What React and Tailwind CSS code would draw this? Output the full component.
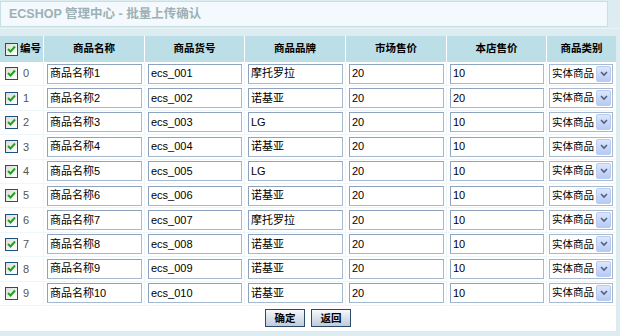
import React from "react";

const rows = [
  ["商品名称1", "ecs_001", "摩托罗拉", "20", "10"],
  ["商品名称2", "ecs_002", "诺基亚", "20", "20"],
  ["商品名称3", "ecs_003", "LG", "20", "10"],
  ["商品名称4", "ecs_004", "诺基亚", "20", "10"],
  ["商品名称5", "ecs_005", "LG", "20", "10"],
  ["商品名称6", "ecs_006", "诺基亚", "20", "10"],
  ["商品名称7", "ecs_007", "摩托罗拉", "20", "10"],
  ["商品名称8", "ecs_008", "诺基亚", "20", "10"],
  ["商品名称9", "ecs_009", "诺基亚", "20", "10"],
  ["商品名称10", "ecs_010", "诺基亚", "20", "10"],
];

const font = { fontFamily: '"Liberation Sans", "Noto Sans CJK SC", sans-serif' };

function Check() {
  return (
    <span className="inline-flex w-[13px] h-[13px] border border-[#1c5180] bg-gradient-to-br from-[#dcdcd7] to-white items-center justify-center shrink-0">
      <svg width="9" height="9" viewBox="0 0 9 9">
        <path d="M1 4 L3.5 6.5 L8 1.5" fill="none" stroke="#21a121" strokeWidth="2" />
      </svg>
    </span>
  );
}

function Field({ value, w }) {
  return (
    <div
      className={`h-[20px] ${w} border border-[#a5b9d1] border-t-[#8ea3bd] border-l-[#8ea3bd] bg-white flex items-center pl-[2px] text-[11px] text-black leading-none`}
    >
      {value}
    </div>
  );
}

function Select() {
  return (
    <div className="h-[20px] w-[64px] border border-[#a5b9d1] bg-white flex items-center justify-between pl-[2px] pr-[1px] text-[10.5px] text-black">
      <span className="whitespace-nowrap">实体商品</span>
      <span className="w-[15px] h-[16px] shrink-0 rounded-[2px] border border-[#b9cbf2] bg-gradient-to-b from-[#dde7fb] to-[#b7caf3] flex items-center justify-center">
        <svg width="8" height="6" viewBox="0 0 8 6">
          <path d="M1 1 L4 4 L7 1" fill="none" stroke="#4d6185" strokeWidth="1.6" />
        </svg>
      </span>
    </div>
  );
}

const cols = "grid grid-cols-[44px_101px_100px_101px_101px_100px_69px]";

export default function App() {
  return (
    <div className="w-[620px] h-[336px] bg-[#dcecf1] overflow-hidden" style={font}>
      <div className="h-[28px] pt-[1px]">
        <div className="h-[26px] w-[608px] border border-[#c9dfe6] bg-[#f3f9fd] flex items-center pl-[8px] text-[12.5px] font-bold text-[#9db0b6]">
          ECSHOP 管理中心 - 批量上传确认
        </div>
      </div>
      <div className="h-[8px] border-t border-[#e8f3f6]" />
      <div className="w-[616px] bg-white">
        <div className={`${cols} h-[26px] bg-[#bcdee7] text-[10.5px] font-bold text-black`}>
          <div className="flex items-center gap-[2px] pl-[5px] border-r border-white">
            <Check />
            <span>编号</span>
          </div>
          {["商品名称", "商品货号", "商品品牌", "市场售价", "本店售价", "商品类别"].map((h, i) => (
            <div key={i} className={`flex items-center justify-center ${i < 5 ? "border-r border-white" : ""}`}>
              {h}
            </div>
          ))}
        </div>
        {rows.map((r, i) => (
          <div key={i} className={`${cols} h-[24.4px] border-b border-[#eef6f9]`}>
            <div className="flex items-center gap-[5px] pl-[5px] border-r border-[#eef6f9] text-[11px] text-[#555]">
              <Check />
              <span>{i}</span>
            </div>
            <div className="flex items-center pl-[3px] border-r border-[#eef6f9]">
              <Field value={r[0]} w="w-[95px]" />
            </div>
            <div className="flex items-center pl-[3px] border-r border-[#eef6f9]">
              <Field value={r[1]} w="w-[94px]" />
            </div>
            <div className="flex items-center pl-[3px] border-r border-[#eef6f9]">
              <Field value={r[2]} w="w-[95px]" />
            </div>
            <div className="flex items-center pl-[3px] border-r border-[#eef6f9]">
              <Field value={r[3]} w="w-[95px]" />
            </div>
            <div className="flex items-center pl-[3px] border-r border-[#eef6f9]">
              <Field value={r[4]} w="w-[94px]" />
            </div>
            <div className="flex items-center pl-[2px]">
              <Select />
            </div>
          </div>
        ))}
        <div className="h-[25px] flex items-center justify-center gap-[6px]">
          {["确定", "返回"].map((b) => (
            <button
              key={b}
              className="w-[40px] h-[18px] border border-[#2c4a6b] bg-gradient-to-b from-[#f7f9fc] to-[#bfcad9] text-[10.5px] font-bold text-black flex items-center justify-center leading-none"
            >
              {b}
            </button>
          ))}
        </div>
      </div>
    </div>
  );
}
